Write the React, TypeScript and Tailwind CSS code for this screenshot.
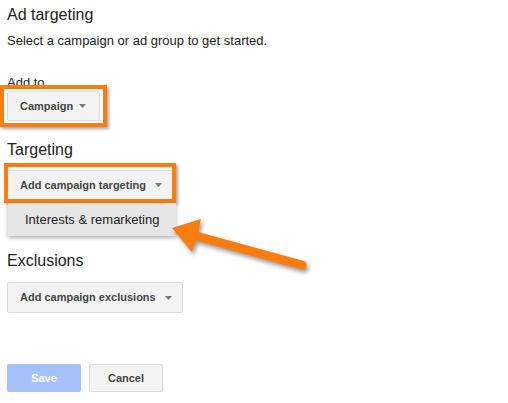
import React from "react";

function Caret() {
  return (
    <svg width="7" height="4" viewBox="0 0 7 4" className="shrink-0">
      <path d="M0 0 L7 0 L3.5 4 Z" fill="#777" />
    </svg>
  );
}

function DropButton({ label, gap, height, pr }: { label: string; gap: string; height: string; pr: string }) {
  return (
    <div
      className={`flex items-center ${gap} ${height} ${pr} pl-[12px] bg-[#f3f3f3] border border-[#dcdcdc] rounded-[2px] text-[11px] font-bold text-[#444]`}
    >
      <span>{label}</span>
      <Caret />
    </div>
  );
}

export default function App() {
  return (
    <div className="relative w-[508px] h-[403px] overflow-hidden bg-white font-['Liberation_Sans',Arial,sans-serif] text-[#222]">
      <div className="flex flex-col items-start pl-[7px] pt-[5px]">
        <h2 className="text-[16px] leading-[20px]">Ad targeting</h2>
        <p className="mt-[8px] text-[13px] leading-[16px]">Select a campaign or ad group to get started.</p>

        <div className="mt-[26px] text-[13px] leading-[16px]">Add to</div>
        <div className="relative">
          <DropButton label="Campaign" gap="gap-[6px]" height="h-[30px]" pr="pr-[13px]" />
          <div className="absolute top-[-6px] bottom-[-6px] left-[-7px] right-[-7px] border-[4px] border-[#fb7d0f] shadow-[2px_2px_3px_rgba(0,0,0,0.35)] pointer-events-none" />
        </div>

        <h2 className="mt-[19px] text-[16px] leading-[20px]">Targeting</h2>
        <div className="relative mt-[10px]">
          <DropButton label="Add campaign targeting" gap="gap-[9px]" height="h-[30px]" pr="pr-[10px]" />
          <div className="absolute top-[-7px] bottom-[-3px] left-[-3px] right-[-3px] border-[4px] border-[#fb7d0f] shadow-[2px_2px_3px_rgba(0,0,0,0.35)] pointer-events-none" />
          <div className="absolute left-[1px] top-[33px] w-[168px] h-[33px] flex items-center pl-[17px] bg-[#e6e6e6] text-[13px] text-[#222] shadow-[0_2px_4px_rgba(0,0,0,0.3)]">
            Interests &amp; remarketing
          </div>
        </div>

        <h2 className="mt-[51px] text-[16px] leading-[20px]">Exclusions</h2>
        <div className="mt-[11px]">
          <DropButton label="Add campaign exclusions" gap="gap-[9px]" height="h-[31px]" pr="pr-[10px]" />
        </div>

        <div className="mt-[51px] flex gap-[8px]">
          <button className="w-[74px] h-[28px] rounded-[2px] bg-[#a6c0fb] text-white text-[11px] font-bold">
            Save
          </button>
          <button className="w-[74px] h-[28px] rounded-[2px] bg-[#f3f3f3] border border-[#dcdcdc] text-[#444] text-[11px] font-bold">
            Cancel
          </button>
        </div>
      </div>

      <svg
        className="absolute left-0 top-0 pointer-events-none"
        width="508"
        height="403"
        viewBox="0 0 508 403"
        style={{ filter: "drop-shadow(2px 3px 2px rgba(0,0,0,0.4))" }}
      >
        <line x1="196" y1="236" x2="302" y2="265" stroke="#fb7d0f" strokeWidth="9" strokeLinecap="round" />
        <path d="M172 228 L201 219 L197 236 L192 252 Z" fill="#fb7d0f" />
      </svg>
    </div>
  );
}
